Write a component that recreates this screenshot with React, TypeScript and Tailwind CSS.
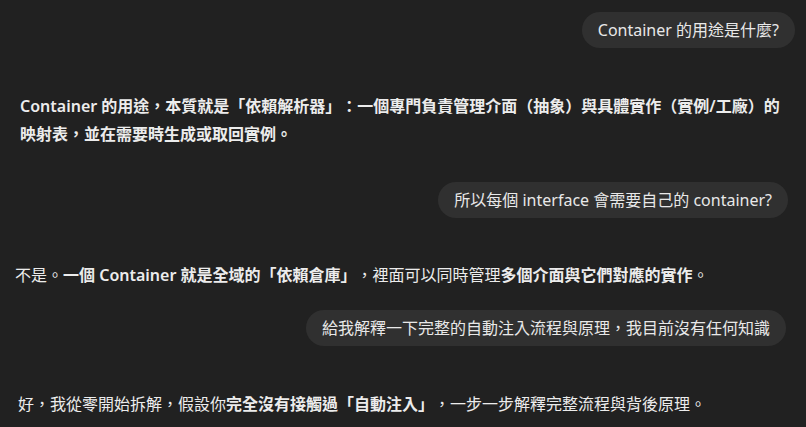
import React from "react";

/* Chat transcript — dark theme, user bubbles right, answers left */

const font = {
  fontFamily: '"Noto Sans", "Noto Sans CJK TC", sans-serif',
};

function UserBubble({ text, className }: { text: string; className: string }) {
  return (
    <div className={`flex justify-end ${className}`}>
      <div className="rounded-full bg-[#303030] px-4 py-2 text-[16px] leading-5 text-[#e8e8e8]">
        {text}
      </div>
    </div>
  );
}

export default function App() {
  return (
    <div
      lang="zh-TW"
      className="w-[806px] h-[427px] overflow-hidden bg-[#212121] text-[#ececec] flex flex-col [text-spacing-trim:space-all]"
      style={font}
    >
      <UserBubble text="Container 的用途是什麼?" className="mt-3 mr-[11px]" />

      {/* Answer 1 */}
      <p className="mt-[44px] pl-5 pr-[24px] text-[16px] leading-7 font-semibold">
        Container 的用途，本質就是「依賴解析器」：一個專門負責管理介面（抽象）與具體實作（實例/工廠）的映射表，並在需要時生成或取回實例。
      </p>

      <UserBubble
        text="所以每個 interface 會需要自己的 container?"
        className="mt-[34px] mr-[18px]"
      />

      {/* Answer 2 */}
      <p className="mt-[43px] pl-[15px] text-[16px] leading-7">
        不是。<span className="font-semibold">一個 Container 就是全域的「依賴倉庫」</span>，裡面可以同時管理
        <span className="font-semibold">多個介面與它們對應的實作</span>。
      </p>

      <UserBubble
        text="給我解釋一下完整的自動注入流程與原理，我目前沒有任何知識"
        className="mt-[21px] mr-5"
      />

      {/* Answer 3 */}
      <p className="mt-[44px] pl-[18px] text-[16px] leading-7">
        好，我從零開始拆解，假設你
        <span className="font-semibold">完全沒有接觸過「自動注入」</span>
        ，一步一步解釋完整流程與背後原理。
      </p>
    </div>
  );
}
